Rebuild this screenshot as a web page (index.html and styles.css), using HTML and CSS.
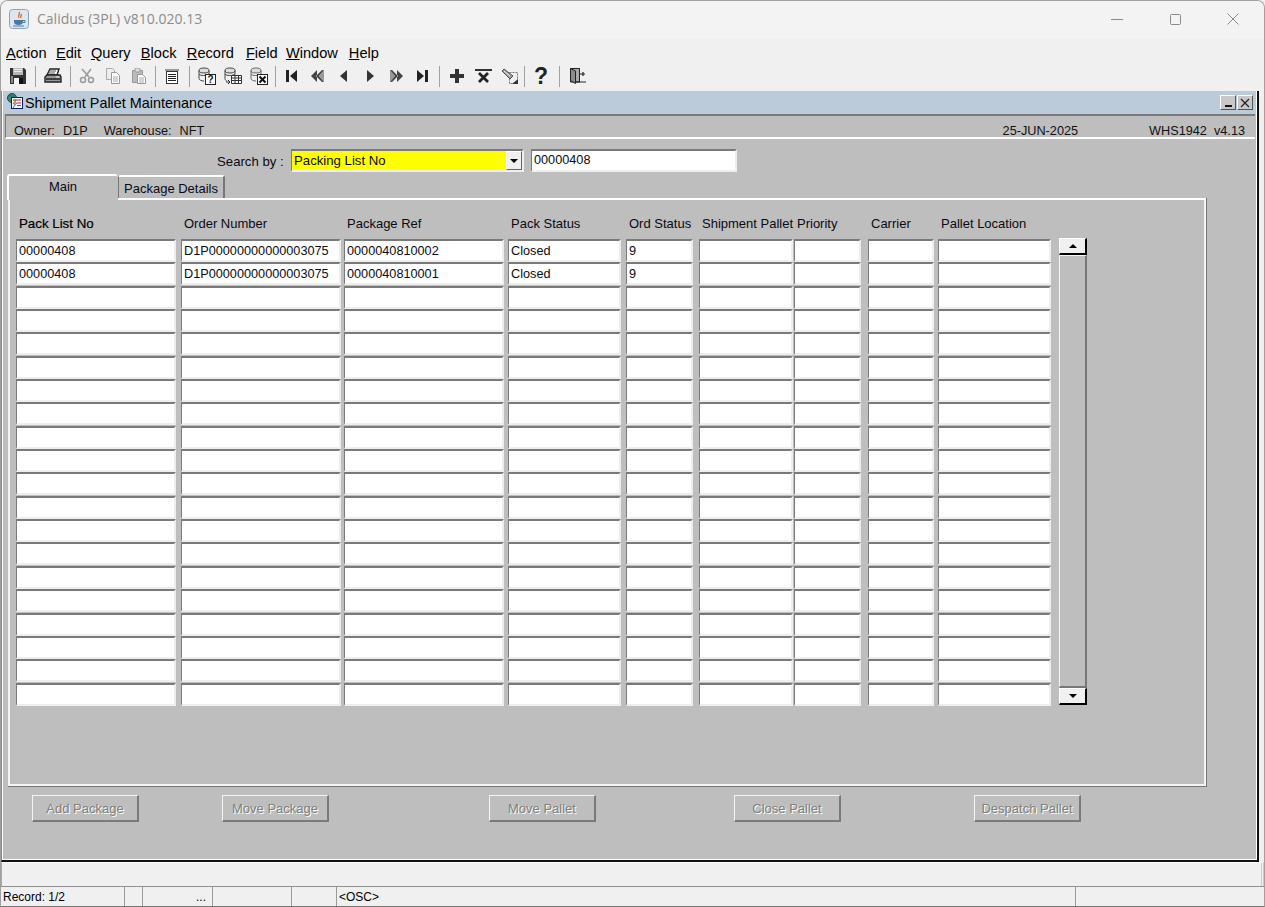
FILE: index.html
```html
<!DOCTYPE html>
<html lang="en">
<head>
<meta charset="utf-8">
<title>Calidus (3PL) v810.020.13</title>
<link rel="stylesheet" href="styles.css">
</head>
<body>
<div class="app">
  <header class="titlebar">
    <svg class="java" viewBox="0 0 20 20" width="20" height="20">
      <rect x=".5" y=".5" width="19" height="19" rx="3" fill="#dfe6ee" stroke="#8fa3b8"/>
      <path d="M10 3c2 2-2 3 0 6M12 5c1 1-1 2 0 4" fill="none" stroke="#d9651f" stroke-width="1.3"/>
      <path d="M5 11h9v2c0 2-2 3-4.500 3S5 15 5 13z" fill="#4a79a8"/>
      <path d="M14 11.500h2v2h-2" fill="none" stroke="#4a79a8"/>
      <path d="M4 17h11" stroke="#4a79a8"/>
    </svg>
    <span class="apptitle">Calidus (3PL) v810.020.13</span>
    <div class="winctl">
      <svg viewBox="0 0 12 12" width="12" height="12"><path d="M0 6.500h12" stroke="#8a8a8a"/></svg>
      <svg viewBox="0 0 12 12" width="12" height="12"><rect x="1.500" y="1.500" width="10" height="10" rx="1" fill="none" stroke="#8a8a8a"/></svg>
      <svg viewBox="0 0 12 12" width="12" height="12"><path d="M.5.500l11 11M11.500.500l-11 11" stroke="#8a8a8a"/></svg>
    </div>
  </header>

  <nav class="menubar">
    <span class="m-action"><u>A</u>ction</span>
    <span class="m-edit"><u>E</u>dit</span>
    <span class="m-query"><u>Q</u>uery</span>
    <span class="m-block"><u>B</u>lock</span>
    <span class="m-record"><u>R</u>ecord</span>
    <span class="m-field"><u>F</u>ield</span>
    <span class="m-window"><u>W</u>indow</span>
    <span class="m-help"><u>H</u>elp</span>
  </nav>

  <div class="toolbar">
    <span class="tb"><svg viewBox="0 0 16 16" width="16" height="16"><path d="M0 0h14l2 2v14H0z" fill="#333"/><rect x="3" y="0" width="10" height="7" fill="#b5b5b5"/><rect x="4" y="1" width="8" height="1" fill="#eee"/><rect x="4" y="3" width="8" height="1" fill="#eee"/><rect x="1" y="8" width="2" height="7" fill="#888"/><rect x="4" y="10" width="9" height="6" fill="#111"/><rect x="4" y="10" width="5" height="6" fill="#f4f4f4"/></svg></span>
    <span class="sep s9"></span>
    <span class="tb"><svg viewBox="0 0 18 16" width="18" height="16"><path d="M6 1h9l-2 6H3z" fill="#fff" stroke="#222" stroke-width="1.400"/><path d="M6 3h6M5 5h6" stroke="#555"/><path d="M3 7h13l1 2v5H1V9z" fill="#999" stroke="#222" stroke-width="1.400"/><path d="M2 11h14" stroke="#222" stroke-width="1.500"/><path d="M12 9h3" stroke="#eee"/></svg></span>
    <span class="sep s8"></span>
    <span class="tb"><svg viewBox="0 0 16 16" width="16" height="16"><path d="M12 1L6 9M3 1l7 8" stroke="#9a9a9a" stroke-width="1.600" fill="none"/><circle cx="4" cy="12" r="2.500" fill="none" stroke="#9a9a9a" stroke-width="1.500"/><circle cx="12" cy="12" r="2.500" fill="none" stroke="#9a9a9a" stroke-width="1.500"/></svg></span>
    <span class="tb"><svg viewBox="0 0 16 16" width="16" height="16"><path d="M1.500.500h6l2 2v9h-8z" fill="#eee" stroke="#aaa"/><path d="M6.500 4.500h5l3 3v8h-8z" fill="#fff" stroke="#999"/><path d="M8 9h5M8 11h5M8 13h5" stroke="#aaa"/></svg></span>
    <span class="tb"><svg viewBox="0 0 16 16" width="16" height="16"><path d="M1.500 2.500h10v12h-10z" fill="#bbb" stroke="#999"/><rect x="4" y="0" width="5" height="4" rx="1" fill="#ddd" stroke="#999"/><path d="M6.500 6.500h5l3 3v6h-8z" fill="#fff" stroke="#999"/><path d="M8 10h5M8 12h5M8 14h5" stroke="#aaa"/></svg></span>
    <span class="sep s7"></span>
    <span class="tb"><svg viewBox="0 0 14 15" width="14" height="15" shape-rendering="crispEdges"><rect x="0" y="0" width="14" height="2" fill="#999"/><rect x="1.500" y="2.500" width="11" height="12" fill="#fff" stroke="#333"/><path d="M3 5h8M3 7h8M3 9h8M3 11h8" stroke="#222"/></svg></span>
    <span class="sep s9"></span>
    <span class="tb"><svg viewBox="0 0 18 18" width="18" height="18"><ellipse cx="6" cy="3.500" rx="5" ry="2.500" fill="#ddd" stroke="#444"/><path d="M1 3.500v8c0 1.500 2.500 2.500 5 2.500M11 3.500v4" fill="none" stroke="#444"/><path d="M1 7c1 2 8 2 10 0" fill="none" stroke="#444"/><rect x="7.500" y="7.500" width="10" height="10" fill="#fff" stroke="#222"/><text x="12.500" y="16" class="iconq">?</text></svg></span>
    <span class="tb"><svg viewBox="0 0 18 18" width="18" height="18"><ellipse cx="6" cy="3.500" rx="5" ry="2.500" fill="#ddd" stroke="#444"/><path d="M1 3.500v8c0 1.500 1 2 2 2.500M11 3.500v4" fill="none" stroke="#444"/><path d="M1 7c1 2 8 2 10 0" fill="none" stroke="#444"/><path d="M7.500 8.500h10v8h-10zM7.500 11h10M7.500 13.500h10M11 8.500v8M14.500 8.500v8" fill="#fff" stroke="#333"/><path d="M2 15h4M4 13l2 2-2 2" fill="none" stroke="#333"/></svg></span>
    <span class="tb"><svg viewBox="0 0 18 18" width="18" height="18"><ellipse cx="6" cy="3.500" rx="5" ry="2.500" fill="#ddd" stroke="#666"/><path d="M1 3.500v8c0 1.500 2.500 2.500 5 2.500M11 3.500v4" fill="none" stroke="#666"/><path d="M1 7c1 2 8 2 10 0" fill="none" stroke="#666"/><rect x="7.500" y="7.500" width="10" height="10" fill="#fff" stroke="#222"/><path d="M9.500 9.500l6 6M15.500 9.500l-6 6" stroke="#111" stroke-width="2"/></svg></span>
    <span class="sep s7"></span>
    <span class="tb"><svg viewBox="0 0 12 12" width="12" height="12"><rect x="0" y="0" width="3" height="12" fill="#222"/><path d="M11 0v12L4 6z" fill="#222"/></svg></span>
    <span class="tb"><svg viewBox="0 0 14 12" width="14" height="12"><path d="M6 0v12L0 6zM13 0l-2 0-6 6 6 6h2L8 6z" fill="#444"/><path d="M13 0v12L8 6z" fill="#999"/></svg></span>
    <span class="tb"><svg viewBox="0 0 8 12" width="8" height="12"><path d="M7 0v12L0 6z" fill="#333"/></svg></span>
    <span class="tb"><svg viewBox="0 0 8 12" width="8" height="12"><path d="M1 0v12l7-6z" fill="#333"/></svg></span>
    <span class="tb"><svg viewBox="0 0 14 12" width="14" height="12"><path d="M1 0v12l5-6z" fill="#999"/><path d="M8 0v12l6-6zM1 0h2l6 6-6 6H1l5-6z" fill="#444"/></svg></span>
    <span class="tb"><svg viewBox="0 0 12 12" width="12" height="12"><path d="M1 0v12l7-6z" fill="#222"/><rect x="9" y="0" width="3" height="12" fill="#222"/></svg></span>
    <span class="sep s8"></span>
    <span class="tb t27"><svg viewBox="0 0 14 14" width="14" height="14" shape-rendering="crispEdges"><path d="M5 0h4v5h5v4H9v5H5V9H0V5h5z" fill="#333"/></svg></span>
    <span class="tb t27"><svg viewBox="0 0 17 14" width="17" height="14"><path d="M0 1h17" stroke="#333" stroke-width="2"/><path d="M4 4l9 9M13 4l-9 9" stroke="#222" stroke-width="2.800"/></svg></span>
    <span class="tb"><svg viewBox="0 0 18 17" width="18" height="17"><path d="M8.500 4.500h8v11h-8z" fill="none" stroke="#777" stroke-dasharray="2 1"/><path d="M1 3l2-2 9 7-3 3z" fill="#999" stroke="#555"/><path d="M3 3l6 5" stroke="#eee"/><path d="M17 16h-6l6-5z" fill="#333"/></svg></span>
    <span class="sep s3"></span>
    <span class="tb t30 helpq">?</span>
    <span class="sep s6"></span>
    <span class="tb t32"><svg viewBox="0 0 16 16" width="16" height="16"><path d="M.5.500h9v13.500H.5z" fill="#aaa" stroke="#222"/><path d="M.5.500l5 2.500v12.500l-5-3z" fill="#8c8c8c" stroke="#222"/><path d="M9.500.500v13.500M6 14h10" stroke="#222"/><path d="M10 6h5M13 4v4" stroke="#222" stroke-width="1.200"/></svg></span>
  </div>

  <main class="mdi">
    <div class="frame-title">
      <svg class="frame-icon" viewBox="0 0 16 16" width="16" height="16"><circle cx="5" cy="5" r="4.500" fill="#3f8f5c" stroke="#123f73"/><path d="M2 3c2-1 3 1 5 0" stroke="#1c4fb0" fill="none"/><rect x="4.500" y="4.500" width="11" height="11" fill="#fff" stroke="#111a66"/><path d="M6 7h8M10 10h4M10 12.500h4" stroke="#c22" /><path d="M8 7l-2 4h2l-2 4 4-5H8l1-3z" fill="#f2c500" stroke="#1c2fb0" stroke-width=".4"/></svg>
      <span class="frame-name">Shipment Pallet Maintenance</span>
      <div class="frame-ctl">
        <span class="fbtn"><span class="minbar"></span></span>
        <span class="fbtn"><svg viewBox="0 0 10 10" width="10" height="10"><path d="M1 1l8 8M9 1l-8 8" stroke="#222" stroke-width="1.200"/></svg></span>
      </div>
    </div>
    <div class="infobar">
      <span class="owner">Owner:&nbsp; D1P</span>
      <span class="wh">Warehouse:&nbsp; NFT</span>
      <span class="date">25-JUN-2025</span>
      <span class="ver">WHS1942&nbsp; v4.13</span>
    </div>
    <section class="content">
      <div class="search">
        <label class="search-label">Search by :</label>
        <div class="combo"><span class="combo-text">Packing List No</span><span class="combo-btn"><span class="tri-down"></span></span></div>
        <div class="search-field">00000408</div>
      </div>
      <div class="tabs">
        <span class="tab tab-active">Main</span>
        <span class="tab tab-other">Package Details</span>
      </div>
      <div class="canvas">
        <div class="grid-wrap">
          <div class="grid">
            <div class="row head">
              <span class="h c1 strong">Pack List No</span><span class="h c2">Order Number</span><span class="h c3">Package Ref</span><span class="h c4">Pack Status</span><span class="h c5">Ord Status</span><span class="h c6">Shipment Pallet</span><span class="h c7">Priority</span><span class="h c8">Carrier</span><span class="h c9">Pallet Location</span>
            </div>
            <div class="row"><div class="f c1">00000408</div><div class="f c2">D1P00000000000003075</div><div class="f c3">0000040810002</div><div class="f c4">Closed</div><div class="f c5">9</div><div class="f c6"></div><div class="f c7"></div><div class="f c8"></div><div class="f c9"></div></div>
            <div class="row"><div class="f c1">00000408</div><div class="f c2">D1P00000000000003075</div><div class="f c3">0000040810001</div><div class="f c4">Closed</div><div class="f c5">9</div><div class="f c6"></div><div class="f c7"></div><div class="f c8"></div><div class="f c9"></div></div>
            <div class="row"><div class="f c1"></div><div class="f c2"></div><div class="f c3"></div><div class="f c4"></div><div class="f c5"></div><div class="f c6"></div><div class="f c7"></div><div class="f c8"></div><div class="f c9"></div></div>
            <div class="row"><div class="f c1"></div><div class="f c2"></div><div class="f c3"></div><div class="f c4"></div><div class="f c5"></div><div class="f c6"></div><div class="f c7"></div><div class="f c8"></div><div class="f c9"></div></div>
            <div class="row"><div class="f c1"></div><div class="f c2"></div><div class="f c3"></div><div class="f c4"></div><div class="f c5"></div><div class="f c6"></div><div class="f c7"></div><div class="f c8"></div><div class="f c9"></div></div>
            <div class="row"><div class="f c1"></div><div class="f c2"></div><div class="f c3"></div><div class="f c4"></div><div class="f c5"></div><div class="f c6"></div><div class="f c7"></div><div class="f c8"></div><div class="f c9"></div></div>
            <div class="row"><div class="f c1"></div><div class="f c2"></div><div class="f c3"></div><div class="f c4"></div><div class="f c5"></div><div class="f c6"></div><div class="f c7"></div><div class="f c8"></div><div class="f c9"></div></div>
            <div class="row"><div class="f c1"></div><div class="f c2"></div><div class="f c3"></div><div class="f c4"></div><div class="f c5"></div><div class="f c6"></div><div class="f c7"></div><div class="f c8"></div><div class="f c9"></div></div>
            <div class="row"><div class="f c1"></div><div class="f c2"></div><div class="f c3"></div><div class="f c4"></div><div class="f c5"></div><div class="f c6"></div><div class="f c7"></div><div class="f c8"></div><div class="f c9"></div></div>
            <div class="row"><div class="f c1"></div><div class="f c2"></div><div class="f c3"></div><div class="f c4"></div><div class="f c5"></div><div class="f c6"></div><div class="f c7"></div><div class="f c8"></div><div class="f c9"></div></div>
            <div class="row"><div class="f c1"></div><div class="f c2"></div><div class="f c3"></div><div class="f c4"></div><div class="f c5"></div><div class="f c6"></div><div class="f c7"></div><div class="f c8"></div><div class="f c9"></div></div>
            <div class="row"><div class="f c1"></div><div class="f c2"></div><div class="f c3"></div><div class="f c4"></div><div class="f c5"></div><div class="f c6"></div><div class="f c7"></div><div class="f c8"></div><div class="f c9"></div></div>
            <div class="row"><div class="f c1"></div><div class="f c2"></div><div class="f c3"></div><div class="f c4"></div><div class="f c5"></div><div class="f c6"></div><div class="f c7"></div><div class="f c8"></div><div class="f c9"></div></div>
            <div class="row"><div class="f c1"></div><div class="f c2"></div><div class="f c3"></div><div class="f c4"></div><div class="f c5"></div><div class="f c6"></div><div class="f c7"></div><div class="f c8"></div><div class="f c9"></div></div>
            <div class="row"><div class="f c1"></div><div class="f c2"></div><div class="f c3"></div><div class="f c4"></div><div class="f c5"></div><div class="f c6"></div><div class="f c7"></div><div class="f c8"></div><div class="f c9"></div></div>
            <div class="row"><div class="f c1"></div><div class="f c2"></div><div class="f c3"></div><div class="f c4"></div><div class="f c5"></div><div class="f c6"></div><div class="f c7"></div><div class="f c8"></div><div class="f c9"></div></div>
            <div class="row"><div class="f c1"></div><div class="f c2"></div><div class="f c3"></div><div class="f c4"></div><div class="f c5"></div><div class="f c6"></div><div class="f c7"></div><div class="f c8"></div><div class="f c9"></div></div>
            <div class="row"><div class="f c1"></div><div class="f c2"></div><div class="f c3"></div><div class="f c4"></div><div class="f c5"></div><div class="f c6"></div><div class="f c7"></div><div class="f c8"></div><div class="f c9"></div></div>
            <div class="row"><div class="f c1"></div><div class="f c2"></div><div class="f c3"></div><div class="f c4"></div><div class="f c5"></div><div class="f c6"></div><div class="f c7"></div><div class="f c8"></div><div class="f c9"></div></div>
            <div class="row"><div class="f c1"></div><div class="f c2"></div><div class="f c3"></div><div class="f c4"></div><div class="f c5"></div><div class="f c6"></div><div class="f c7"></div><div class="f c8"></div><div class="f c9"></div></div>
          </div>
          <div class="scroll">
            <span class="sb-btn"><span class="tri-up"></span></span>
            <span class="sb-track"></span>
            <span class="sb-btn"><span class="tri-down"></span></span>
          </div>
        </div>
      </div>
      <div class="actions">
        <button class="btn b1" disabled>Add Package</button>
        <button class="btn b2" disabled>Move Package</button>
        <button class="btn b3" disabled>Move Pallet</button>
        <button class="btn b4" disabled>Close Pallet</button>
        <button class="btn b5" disabled>Despatch Pallet</button>
      </div>
    </section>
  </main>

  <div class="msgbar"></div>
  <footer class="status">
    <span class="st st-a">Record: 1/2</span>
    <span class="st st-b"></span>
    <span class="st st-c">...</span>
    <span class="st st-d"></span>
    <span class="st st-e"></span>
    <span class="st st-f">&lt;OSC&gt;</span>
    <span class="st st-g"></span>
  </footer>
</div>
</body>
</html>
```
FILE: styles.css
```css
* { box-sizing: border-box; }
html, body { margin: 0; padding: 0; }
body { font-family: "Liberation Sans", Arial, sans-serif; color: #0a0a14; background: #f0f0f0; }

.app { width: 1265px; height: 907px; display: flex; flex-direction: column; overflow: hidden; background: #f0f0f0; border-radius: 8px 8px 0 0; border: 1px solid #a0a0a0; border-bottom-color: #777; }

/* Window chrome */
.titlebar { height: 38px; flex: none; display: flex; align-items: center; padding: 0 0 3px 8px; background: #f3f3f3; }
.java { flex: none; }
.apptitle { margin-left: 8px; font-family: "Open Sans", "Noto Sans", sans-serif; font-size: 14px; color: #8c8c8c; }
.winctl { margin-left: auto; display: flex; gap: 46px; padding-right: 25px; }

.menubar { height: 26px; flex: none; display: flex; align-items: center; padding: 2px 0 0 5px; font-size: 14.600px; color: #000; }
.m-edit { margin-left: 9.400px; }
.m-query { margin-left: 9.800px; }
.m-block { margin-left: 10.200px; }
.m-record { margin-left: 10.300px; }
.m-field { margin-left: 12px; }
.m-window { margin-left: 8.400px; }
.m-help { margin-left: 11px; }

.toolbar { height: 25px; flex: none; display: flex; align-items: center; padding: 0 0 3px 4px; }
.tb { width: 26px; height: 22px; flex: none; display: flex; align-items: center; justify-content: center; }
.t27 { width: 27px; }
.t30 { width: 30px; }
.t32 { width: 32px; }
.sep { height: 21px; flex: none; }
.sep::after { content: ""; display: block; width: 1px; height: 21px; margin: 0 auto; background: #a0a0a0; }
.s9 { width: 9px; }
.s8 { width: 8px; }
.s7 { width: 7px; }
.s6 { width: 6px; }
.s3 { width: 3px; }
.helpq { font-size: 23px; font-weight: bold; color: #222; }
.iconq { font: bold 10px "Liberation Sans", sans-serif; text-anchor: middle; fill: #111; }

/* MDI frame */
.mdi { height: 771px; flex: none; margin: 1px 5px 0 0; background: #bebebe; border-left: 1px solid #888; border-right: 2px solid #111; border-bottom: 2px solid #111; display: flex; flex-direction: column; box-shadow: inset 1px 0 0 #fff, inset -1px 0 0 #fff, inset 0 -1px 0 #fff; }
.frame-title { height: 23px; flex: none; display: flex; align-items: center; padding-left: 4px; background: #bccbd9; margin: 0 1px; }
.frame-icon { flex: none; margin-top: -4px; }
.frame-name { margin-left: 2px; font-size: 14.400px; color: #000; }
.frame-ctl { margin-left: auto; display: flex; gap: 1px; padding-right: 3px; }
.fbtn { width: 16px; height: 15px; background: #c8c8c8; border: 1px solid; border-color: #fff #555 #555 #fff; display: flex; align-items: center; justify-content: center; }
.minbar { display: block; width: 7px; height: 2px; background: #111; margin-top: 7px; }

.infobar { height: 25px; flex: none; margin: 0 2px 0 3px; padding: 8px 0 0 8px; display: flex; align-items: center; font-size: 12.700px; color: #111; border-top: 2px solid #7a7a7a; border-left: 1px solid #7a7a7a; border-bottom: 2px solid #fff; }
.owner { word-spacing: .500px; }
.wh { margin-left: 16px; word-spacing: .500px; }
.date { margin-left: auto; margin-right: 71px; }
.ver { margin-right: 10px; }

.content { flex: 1; padding: 10px 0 0 4px; min-height: 0; }

.search { display: flex; align-items: center; height: 23px; padding-left: 211px; }
.search-label { width: 74px; font-size: 13.200px; padding-top: 2px; white-space: nowrap; }
.combo { width: 233px; height: 23px; display: flex; background: #ff0; border: 1px solid; border-width: 2px 2px 2px 1px; border-color: #7a7a7a #eee #eee #7a7a7a; }
.combo-text { flex: 1; font-size: 13.200px; line-height: 19px; padding-left: 2px; }
.combo-btn { width: 16px; background: #f0f0f0; border: 1px solid; border-color: #fff #666 #666 #fff; display: flex; align-items: center; justify-content: center; }
.search-field { width: 206px; height: 23px; margin-left: 7px; background: #fff; font-size: 12.700px; line-height: 19px; padding-left: 2px; border: 1px solid; border-width: 2px 2px 2px 1px; border-color: #7a7a7a #eee #eee #7a7a7a; }
.tri-down { display: block; width: 0; height: 0; border: 4px solid transparent; border-top: 4px solid #000; border-bottom: 0; }
.tri-up { display: block; width: 0; height: 0; border: 4px solid transparent; border-bottom: 4px solid #000; border-top: 0; }

/* Tabs */
.tabs { display: flex; align-items: flex-end; height: 26px; margin: 2px 0 -2px; padding-left: 1px; position: relative; z-index: 1; }
.tab { display: block; font-size: 13px; text-align: center; background: #bebebe; border-top: 2px solid #fff; border-left: 2px solid #fff; border-right: 2px solid #777; border-radius: 3px 3px 0 0; }
.tab-active { width: 111px; height: 26px; line-height: 22px; border-right: 1px solid #bebebe; }
.tab-other { width: 107px; height: 23px; line-height: 23px; margin-bottom: 2px; border-left: 1px solid #777; }

.canvas { margin-left: 2px; width: 1198px; height: 588px; padding: 16px 0 0 6px; border-top: 2px solid #fff; border-left: 2px solid #f4f4f4; border-right: 2px solid #f4f4f4; border-bottom: 2px solid #f4f4f4; box-shadow: 1px 0 0 #777, 0 1px 0 #777, 1px 1px 0 #777; }
.grid-wrap { display: flex; }
.grid { width: 1035px; flex: none; }
.row { display: flex; height: 23.350px; }
.row.head { height: 23px; }
.c1 { width: 160px; }
.c2 { width: 160px; margin-left: 5px; }
.c3 { width: 160px; margin-left: 3px; }
.c4 { width: 113px; margin-left: 4px; }
.c5 { width: 67px; margin-left: 5px; }
.c6 { width: 94px; margin-left: 6px; }
.c7 { width: 67px; margin-left: 1px; }
.c8 { width: 66px; margin-left: 7px; }
.c9 { width: 113px; margin-left: 4px; }
.h { font-size: 13px; padding-left: 3px; line-height: 16px; white-space: nowrap; }
.h.strong { font-size: 13.300px; -webkit-text-stroke: .2px #000; color: #000; }
.f { height: 23px; background: #fff; font-size: 12.700px; line-height: 19px; padding: 1px 0 0 2px; white-space: nowrap; overflow: hidden; border-style: solid; border-width: 2px 2px 2px 1px; border-color: #7a7a7a #eee #eee #7a7a7a; }

.scroll { width: 28px; height: 467px; margin: 22px 0 0 8px; display: flex; flex-direction: column; flex: none; }
.sb-btn { height: 17px; flex: none; background: #f0f0f0; display: flex; align-items: center; justify-content: center; border: 1px solid; border-width: 1px 2px 2px 1px; border-color: #fff #000 #000 #fff; }
.sb-track { flex: 1; border: 1px solid; border-width: 1px 2px 2px 1px; border-color: #f4f4f4 #777 #777 #f4f4f4; background: #bebebe; }

.actions { display: flex; margin-top: 9px; padding-left: 26px; }
.btn { width: 107px; height: 27px; padding: 0; background: #bebebe; font: 13px "Liberation Sans", Arial, sans-serif; color: #7f7f7f; text-shadow: 1px 1px 0 #fff; border-style: solid; border-color: #f4f4f4 #7a7a7a #7a7a7a #f4f4f4; border-width: 1px 2px 2px 1px; }
.b2 { margin-left: 83px; }
.b3 { margin-left: 160px; }
.b4 { margin-left: 138px; }
.b5 { margin-left: 133px; }

/* Bottom bars */
.msgbar { height: 24px; flex: none; border-top: 1px solid #fff; border-left: 1px solid #aaa; border-right: 3px double #ccc; }
.status { flex: 1; display: flex; border-top: 1px solid #909090; font-size: 12px; line-height: 20px; }
.st { display: block; flex: none; height: 100%; border-right: 1px solid #9a9a9a; white-space: nowrap; color: #000; }
.st-a { width: 124px; padding-left: 2px; }
.st-b { width: 18px; }
.st-c { width: 70px; text-align: right; padding-right: 6px; }
.st-d { width: 79px; }
.st-e { width: 45px; }
.st-f { width: 739px; padding-left: 2px; }
.st-g { flex: 1; border-right: 0; }
```
